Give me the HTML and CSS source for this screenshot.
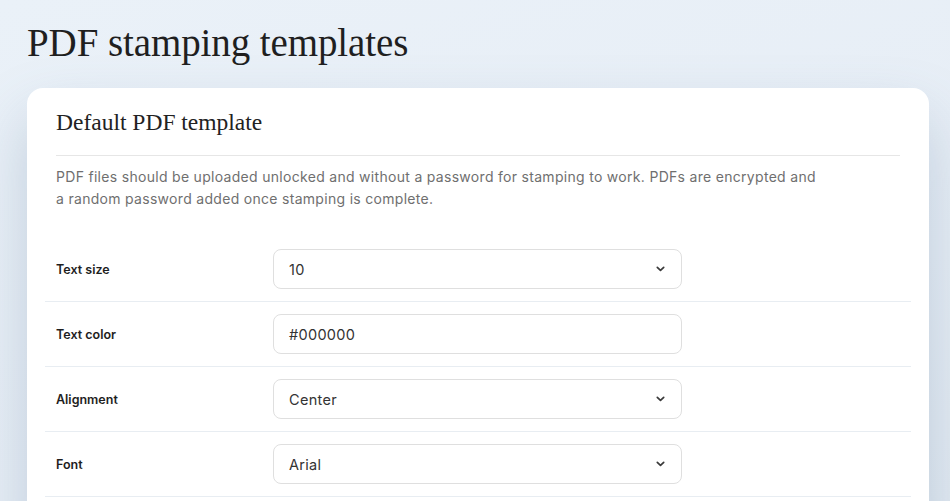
FILE: index.html
```html
<!DOCTYPE html>
<html>
<head>
<meta charset="utf-8">
<link rel="stylesheet" href="styles.css">
</head>
<body>
<main class="page">
  <h1 class="page-title">PDF stamping templates</h1>
  <section class="card">
    <div class="card-head">
      <h2 class="card-title">Default PDF template</h2>
      <p class="card-desc">PDF files should be uploaded unlocked and without a password for stamping to work. PDFs are encrypted and a random password added once stamping is complete.</p>
    </div>
    <div class="rows">
      <div class="row">
        <label class="row-label">Text size</label>
        <div class="field select">
          <span class="field-value">10</span>
          <svg class="chev" width="9" height="6" viewBox="0 0 9 6"><path d="M1.3 1.3L4.5 4.4L7.7 1.3" fill="none" stroke="#3a3a3a" stroke-width="1.7" stroke-linecap="round" stroke-linejoin="round"/></svg>
        </div>
      </div>
      <div class="row">
        <label class="row-label">Text color</label>
        <div class="field">
          <span class="field-value">#000000</span>
        </div>
      </div>
      <div class="row">
        <label class="row-label">Alignment</label>
        <div class="field select">
          <span class="field-value">Center</span>
          <svg class="chev" width="9" height="6" viewBox="0 0 9 6"><path d="M1.3 1.3L4.5 4.4L7.7 1.3" fill="none" stroke="#3a3a3a" stroke-width="1.7" stroke-linecap="round" stroke-linejoin="round"/></svg>
        </div>
      </div>
      <div class="row">
        <label class="row-label">Font</label>
        <div class="field select">
          <span class="field-value">Arial</span>
          <svg class="chev" width="9" height="6" viewBox="0 0 9 6"><path d="M1.3 1.3L4.5 4.4L7.7 1.3" fill="none" stroke="#3a3a3a" stroke-width="1.7" stroke-linecap="round" stroke-linejoin="round"/></svg>
        </div>
      </div>
    </div>
  </section>
</main>
</body>
</html>
```
FILE: styles.css
```css
* { box-sizing: border-box; }
html, body { margin: 0; height: 100%; }
body {
  background: linear-gradient(160deg, #eaf1f8 0%, #e7eef6 60%, #e2eaf2 100%);
  font-family: "Inter", "Liberation Sans", sans-serif;
  color: #222;
  overflow: hidden;
}
.page {
  padding: 18px 21px 0 27px;
}
.page-title {
  margin: 0 0 20px;
  font-family: "Liberation Serif", serif;
  font-weight: 400;
  font-size: 39px;
  line-height: 50px;
  color: #1f1f1f;
  letter-spacing: -0.1px;
}
.card {
  background: #fff;
  border-radius: 16px;
  padding: 19px 18px 40px;
  box-shadow: 0 30px 60px rgba(90, 120, 150, 0.28);
}
.card-head {
  padding: 0 11px;
}
.card-title {
  margin: 0;
  padding-bottom: 18px;
  border-bottom: 1px solid #e6e6e6;
  font-family: "Liberation Serif", serif;
  font-weight: 400;
  font-size: 23.5px;
  line-height: 30px;
  color: #222;
}
.card-desc {
  margin: 10px 0 27px;
  font-size: 14px;
  letter-spacing: 0.3px;
  line-height: 22px;
  color: #6f6f6f;
  max-width: 770px;
}
.row {
  display: flex;
  align-items: center;
  padding: 12px 0 12px 11px;
  border-bottom: 1px solid #e8edf2;
}
.row-label {
  width: 217px;
  font-size: 12.5px;
  font-weight: 600;
  color: #1e1e1e;
}
.field {
  width: 409px;
  height: 40px;
  border: 1.5px solid #dfdfdf;
  border-radius: 8px;
  display: flex;
  align-items: center;
  justify-content: space-between;
  padding: 0 16px 0 15px;
  font-size: 14.5px;
  letter-spacing: 0.3px;
  color: #333;
}
.chev { flex: none; }
```
